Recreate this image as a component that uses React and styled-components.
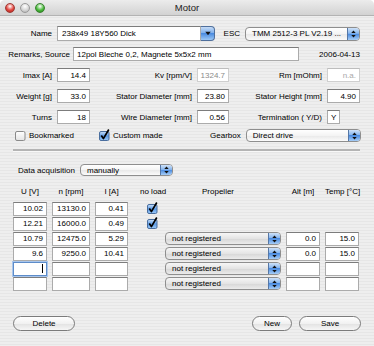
import React from "react";
import styled, { createGlobalStyle } from "styled-components";

const Global = createGlobalStyle`
  body {
    margin: 0;
    background: #ffffff;
  }
`;

const Window = styled.div`
  width: 374px;
  height: 346px;
  border-radius: 5px 5px 0 0;
  overflow: hidden;
  display: flex;
  flex-direction: column;
  font-family: "Liberation Sans", Arial, sans-serif;
  font-size: 8px;
  color: #000;
  background: repeating-linear-gradient(
    to bottom,
    #eeeeee 0px,
    #eeeeee 2px,
    #e6e6e6 2px,
    #e6e6e6 3px
  );
`;

const TitleBar = styled.div`
  height: 16px;
  flex: none;
  display: grid;
  grid-template-columns: 1fr auto 1fr;
  align-items: center;
  background: linear-gradient(#ececec, #d2d2d2);
  border-bottom: 1px solid #b3b3b3;
  box-sizing: border-box;
`;

const Lights = styled.div`
  display: flex;
  gap: 5px;
  padding-left: 5px;
`;

const Light = styled.span`
  width: 10px;
  height: 10px;
  border-radius: 50%;
  box-sizing: border-box;
  border: 1px solid ${(p) => p.$edge};
  background: radial-gradient(circle at 50% 30%, #ffffff 0%, ${(p) => p.$color} 55%, ${(p) => p.$dark} 100%);
`;

const Title = styled.div`
  font-size: 9.5px;
  color: #222;
`;

const Body = styled.div`
  display: flex;
  flex-direction: column;
`;

const Row = styled.div`
  display: flex;
  align-items: center;
  height: ${(p) => p.$h || 14}px;
  margin-top: ${(p) => p.$mt || 0}px;
  padding-left: ${(p) => p.$pl || 0}px;
`;

const Label = styled.span`
  width: ${(p) => p.$w}px;
  flex: none;
  box-sizing: border-box;
  text-align: ${(p) => p.$align || "right"};
  padding-right: ${(p) => (p.$pr === undefined ? 5 : p.$pr)}px;
  white-space: nowrap;
`;

const Field = styled.div`
  width: ${(p) => p.$w}px;
  height: ${(p) => p.$h || 14}px;
  flex: none;
  box-sizing: border-box;
  background: #fff;
  border: 1px solid ${(p) => (p.$disabled ? "#cfcfcf" : "#ababab")};
  border-top-color: ${(p) => (p.$disabled ? "#bdbdbd" : "#7c7c7c")};
  display: flex;
  align-items: center;
  justify-content: ${(p) => (p.$left ? "flex-start" : "flex-end")};
  padding: 0 3px;
  color: ${(p) => p.$muted || "#000"};
  white-space: nowrap;
  overflow: hidden;
  ${(p) =>
    p.$focus &&
    `
    border-color: #5d8cc9;
    box-shadow: 0 0 0 1px #a9c6ec;
  `}
`;

const Caret = styled.span`
  width: 1px;
  height: 9px;
  background: #000;
`;

const ComboWrap = styled.div`
  width: ${(p) => p.$w}px;
  height: 15px;
  flex: none;
  display: flex;
`;

const ComboText = styled(Field)`
  flex: 1;
  width: auto;
  height: 15px;
  justify-content: flex-start;
  padding-left: 4px;
`;

const ComboBtn = styled.div`
  width: 14px;
  flex: none;
  border: 1px solid #4f6f9c;
  border-left: none;
  border-radius: 0 4px 4px 0;
  box-sizing: border-box;
  background: linear-gradient(#c6dcf6 0%, #7fb0ec 45%, #4a8be0 50%, #9cc8f6 100%);
  display: flex;
  align-items: center;
  justify-content: center;
`;

const PopupBox = styled.div`
  width: ${(p) => p.$w}px;
  height: ${(p) => p.$h || 13}px;
  flex: none;
  box-sizing: border-box;
  display: flex;
  border: 1px solid #8e8e8e;
  border-radius: 4px;
  overflow: hidden;
  background: ${(p) =>
    p.$gray
      ? "linear-gradient(#f6f6f6 0%, #e4e4e4 50%, #d6d6d6 51%, #ebebeb 100%)"
      : "linear-gradient(#ffffff 0%, #f4f4f4 50%, #e8e8e8 51%, #fbfbfb 100%)"};
`;

const PopupText = styled.span`
  flex: 1;
  padding-left: 6px;
  display: flex;
  align-items: center;
  white-space: nowrap;
  overflow: hidden;
`;

const Cap = styled.span`
  width: 11px;
  flex: none;
  border-left: 1px solid #5577a6;
  background: linear-gradient(#cfe2f8 0%, #86b5ee 45%, #4a8be0 50%, #a6cdf7 100%);
  display: flex;
  align-items: center;
  justify-content: center;
`;

const CheckWrap = styled.label`
  display: flex;
  align-items: center;
  gap: 3px;
  margin-left: ${(p) => p.$ml || 0}px;
  white-space: nowrap;
`;

const Box = styled.span`
  width: 11px;
  height: 11px;
  flex: none;
  display: block;
`;

const Separator = styled.div`
  height: 0;
  margin: 7px 14px 0 13px;
  border-top: 2px solid #b4b4b4;
  border-bottom: 1px solid #f8f8f8;
`;

const Table = styled.div`
  display: grid;
  grid-template-columns: 34px 38px 33px 27px 116px 34px 34px;
  grid-auto-rows: 13px;
  column-gap: 5px;
  row-gap: 2px;
  padding-left: 13px;
  margin-top: ${(p) => p.$mt || 0}px;
  align-items: center;
`;

const Head = styled.span`
  text-align: ${(p) => (p.$left ? "left" : "center")};
  padding-left: ${(p) => p.$pl || 0}px;
  white-space: nowrap;
`;

const Cell = styled(Field)`
  width: auto;
  height: 14px;
`;

const NoLoad = styled.span`
  justify-self: end;
  margin-right: 2px;
  display: flex;
`;

const Buttons = styled.div`
  display: flex;
  align-items: center;
  gap: 7px;
  padding: 0 13px;
  margin-top: 26px;
`;

const Button = styled.button`
  width: ${(p) => p.$w}px;
  height: 15px;
  padding: 0;
  box-sizing: border-box;
  border: 1px solid #7b7b7b;
  border-radius: 8px;
  background: linear-gradient(#ffffff 0%, #f1f1f1 50%, #e2e2e2 51%, #f6f6f6 100%);
  font-family: inherit;
  font-size: 8px;
  color: #000;
`;

const Spacer = styled.span`
  flex: 1;
`;

const Updown = () => (
  <svg width="5" height="8" viewBox="0 0 5 8">
    <path d="M2.5 0.5 L4.7 3 L0.3 3 Z M2.5 7.5 L4.7 5 L0.3 5 Z" fill="#111" />
  </svg>
);

const Down = () => (
  <svg width="6" height="5" viewBox="0 0 6 5">
    <path d="M0.3 0.8 L5.7 0.8 L3 4.3 Z" fill="#111" />
  </svg>
);

const Popup = ({ w, h, gray, children }) => (
  <PopupBox $w={w} $h={h} $gray={gray}>
    <PopupText>{children}</PopupText>
    <Cap>
      <Updown />
    </Cap>
  </PopupBox>
);

const Check = ({ on }) => (
  <Box>
    <svg width="11" height="11" viewBox="0 0 11 11" style={{ overflow: "visible" }}>
      <defs>
        <linearGradient id="aquaBlue" x1="0" y1="0" x2="0" y2="1">
          <stop offset="0" stopColor="#cde2fa" />
          <stop offset="0.5" stopColor="#5b9ae6" />
          <stop offset="1" stopColor="#9cc9f7" />
        </linearGradient>
        <linearGradient id="aquaWhite" x1="0" y1="0" x2="0" y2="1">
          <stop offset="0" stopColor="#ffffff" />
          <stop offset="1" stopColor="#e4e4e4" />
        </linearGradient>
      </defs>
      <rect
        x="0.5"
        y="1.5"
        width="9.5"
        height="9"
        rx="1.5"
        fill={on ? "url(#aquaBlue)" : "url(#aquaWhite)"}
        stroke={on ? "#4a6e9e" : "#8a8a8a"}
      />
      {on && (
        <path d="M2.3 5.6 L4.4 8.6 L9.8 -0.5" fill="none" stroke="#000" strokeWidth="1.7" strokeLinejoin="round" />
      )}
    </svg>
  </Box>
);

const rows = [
  { u: "10.02", n: "13130.0", i: "0.41", load: true },
  { u: "12.21", n: "16000.0", i: "0.49", load: true },
  { u: "10.79", n: "12475.0", i: "5.29", prop: true, alt: "0.0", temp: "15.0" },
  { u: "9.6", n: "9250.0", i: "10.41", prop: true, alt: "0.0", temp: "15.0" },
  { focus: true, prop: true },
  { prop: true },
];

export default function App() {
  return (
    <>
      <Global />
      <Window>
        <TitleBar>
          <Lights>
            <Light $color="#e2463f" $dark="#a8231c" $edge="#9c3a35" />
            <Light $color="#d6d6d6" $dark="#a9a9a9" $edge="#9a9a9a" />
            <Light $color="#4cbb3d" $dark="#217d18" $edge="#3a7f31" />
          </Lights>
          <Title>Motor</Title>
          <span />
        </TitleBar>
        <Body>
          <Row $mt={10} $h={15}>
            <Label $w={57}>Name</Label>
            <ComboWrap $w={158}>
              <ComboText>238x49 18Y560 Dick</ComboText>
              <ComboBtn>
                <Down />
              </ComboBtn>
            </ComboWrap>
            <Label $w={30}>ESC</Label>
            <Popup w={115} h={14}>TMM 2512-3 PL V2.19 ...</Popup>
          </Row>
          <Row $mt={6}>
            <Label $w={73} $pr={3}>Remarks, Source</Label>
            <Field $w={226} $left>12pol Bleche 0,2, Magnete 5x5x2 mm</Field>
            <Label $w={61} $pr={0}>2006-04-13</Label>
          </Row>
          <Row $mt={7}>
            <Label $w={57}>Imax [A]</Label>
            <Field $w={33}>14.4</Field>
            <Label $w={107}>Kv [rpm/V]</Label>
            <Field $w={32} $disabled $muted="#8a8a8a">1324.7</Field>
            <Label $w={98}>Rm [mOhm]</Label>
            <Field $w={33} $disabled $muted="#a8a8a8">n.a.</Field>
          </Row>
          <Row $mt={7}>
            <Label $w={57}>Weight [g]</Label>
            <Field $w={33}>33.0</Field>
            <Label $w={107}>Stator Diameter [mm]</Label>
            <Field $w={32}>23.80</Field>
            <Label $w={98}>Stator Height [mm]</Label>
            <Field $w={33}>4.90</Field>
          </Row>
          <Row $mt={7}>
            <Label $w={57}>Turns</Label>
            <Field $w={33}>18</Field>
            <Label $w={107}>Wire Diameter [mm]</Label>
            <Field $w={32}>0.56</Field>
            <Label $w={98}>Termination ( Y/D)</Label>
            <Field $w={13} $left>Y</Field>
          </Row>
          <Row $mt={5} $h={13} $pl={15}>
            <CheckWrap>
              <Check />
              Bookmarked
            </CheckWrap>
            <CheckWrap $ml={25}>
              <Check on />
              Custom made
            </CheckWrap>
            <Label $w={83}>Gearbox</Label>
            <Popup w={115}>Direct drive</Popup>
          </Row>
          <Separator />
          <Row $mt={12} $h={12} $pl={18}>
            <Label $w={62} $align="left">Data acquisition</Label>
            <Popup w={93} h={12}>manually</Popup>
          </Row>
          <Table $mt={9}>
            <Head>U [V]</Head>
            <Head>n [rpm]</Head>
            <Head>I [A]</Head>
            <Head $left $pl={7}>no load</Head>
            <Head $left $pl={37}>Propeller</Head>
            <Head>Alt [m]</Head>
            <Head>Temp [°C]</Head>
          </Table>
          <Table $mt={4}>
            {rows.map((r, k) => (
              <React.Fragment key={k}>
                <Cell $focus={r.focus}>{r.focus ? <Caret /> : r.u}</Cell>
                <Cell>{r.n}</Cell>
                <Cell>{r.i}</Cell>
                <NoLoad>{r.load && <Check on />}</NoLoad>
                {r.prop ? <Popup w={116} gray>not registered</Popup> : <span />}
                {r.prop ? <Cell>{r.alt}</Cell> : <span />}
                {r.prop ? <Cell>{r.temp}</Cell> : <span />}
              </React.Fragment>
            ))}
          </Table>
          <Buttons>
            <Button $w={62}>Delete</Button>
            <Spacer />
            <Button $w={40}>New</Button>
            <Button $w={62}>Save</Button>
          </Buttons>
        </Body>
      </Window>
    </>
  );
}
